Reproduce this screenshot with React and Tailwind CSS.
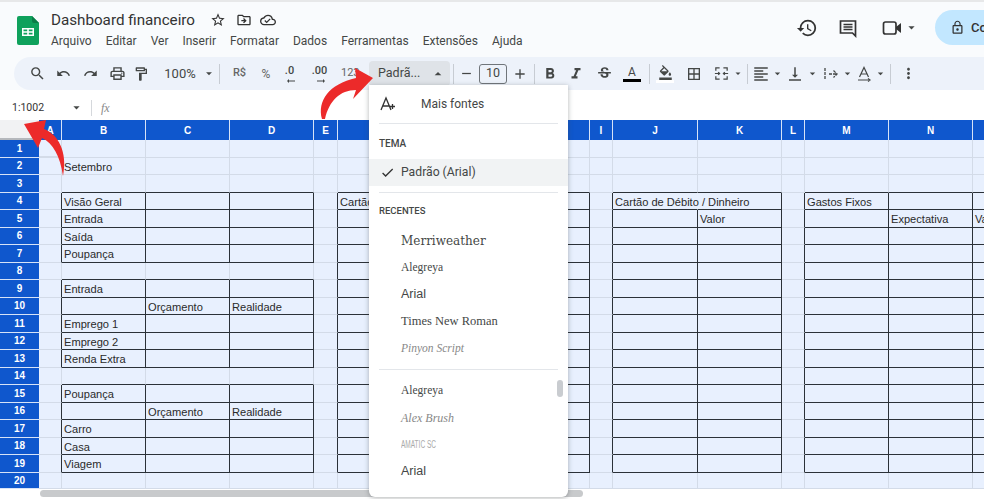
import React from 'react'
import {
  MdSearch, MdUndo, MdRedo, MdOutlinePrint, MdOutlineFormatPaint, MdArrowDropDown, MdArrowDropUp,
  MdRemove, MdAdd, MdFormatBold, MdFormatItalic, MdStrikethroughS, MdOutlineFormatColorFill,
  MdBorderAll, MdFormatAlignLeft, MdVerticalAlignBottom, MdMoreVert, MdHistory,
  MdLockOutline, MdStarBorder, MdOutlineDriveFileMove, MdOutlineCloudDone, MdCheck,
  MdArrowRightAlt,
} from 'react-icons/md'

const colNames = ['A', 'B', 'C', 'D', 'E', 'F', 'G', 'H', 'I', 'J', 'K', 'L', 'M', 'N', 'O']

const boxes = [
  ['BCD', 4, 7],
  ['BCD', 9, 13],
  ['BCD', 15, 19],
  ['FGH', 4, 19],
  ['JK', 4, 19],
  ['MNO', 4, 19],
]

const texts = {
  B2: 'Setembro',
  B4: 'Visão Geral',
  B5: 'Entrada',
  B6: 'Saída',
  B7: 'Poupança',
  B9: 'Entrada',
  C10: 'Orçamento',
  D10: 'Realidade',
  B11: 'Emprego 1',
  B12: 'Emprego 2',
  B13: 'Renda Extra',
  B15: 'Poupança',
  C16: 'Orçamento',
  D16: 'Realidade',
  B17: 'Carro',
  B18: 'Casa',
  B19: 'Viagem',
  F4: 'Cartão',
  J4: 'Cartão de Débito / Dinheiro',
  K5: 'Valor',
  M4: 'Gastos Fixos',
  N5: 'Expectativa',
  O5: 'Valor',
}

function inBox(col, row) {
  return boxes.some(([cols, from, to]) => cols.includes(col) && row >= from && row <= to)
}

function Cell({ col, row, next }) {
  const darkRight = inBox(col, row) || (next && inBox(next, row))
  const darkBottom = inBox(col, row) || inBox(col, row + 1)
  const noRight = col === 'J' && row === 4
  return (
    <div
      className={`min-w-0 border-r border-b pl-[2px] text-[11.1px] leading-[18px] whitespace-nowrap text-[#2a2a2a] ${
        noRight ? 'border-r-transparent' : darkRight ? 'border-r-[#2b3138]' : 'border-r-[#d3dbe8]'
      } ${darkBottom ? 'border-b-[#2b3138]' : 'border-b-[#d3dbe8]'} ${
        col === 'A' && row === 1 ? 'border-b-2 border-b-[#1a5fd0]' : ''
      }`}
    >
      {texts[col + row]}
    </div>
  )
}

function Sheet() {
  const rows = Array.from({ length: 20 }, (_, i) => i + 1)
  return (
    <div className="grid grid-cols-[39px_23px_84px_84px_84px_24px_84px_84px_84px_23px_85px_84px_23px_84px_84px_84px] grid-rows-[20px_repeat(19,17.5px)_16px] overflow-hidden bg-[#e8f0fe] font-['Liberation_Sans',sans-serif]">
      <div className="border-b-2 border-b-[#b5b8bc] bg-[#f1f2f3]" />
      {colNames.map((c) => (
        <div key={c} className="flex items-center justify-center border-r border-r-[#d7e3f7] bg-[#0f57cd] text-[10px] font-bold text-white">
          {c}
        </div>
      ))}
      {rows.map((row) => (
        <React.Fragment key={row}>
          <div className="flex items-center justify-center border-b border-b-[#d7e3f7] bg-[#0f57cd] text-[10px] font-bold text-white">
            {row}
          </div>
          {colNames.map((c, i) => (
            <Cell key={c} col={c} row={row} next={colNames[i + 1]} />
          ))}
        </React.Fragment>
      ))}
    </div>
  )
}

function Caret() {
  return <MdArrowDropDown className="text-[15px] text-[#444746]" />
}

function Sep() {
  return <div className="mx-[3px] h-[20px] w-px shrink-0 bg-[#c7ccd3]" />
}

function MergeIcon() {
  return (
    <svg width="17" height="17" viewBox="0 0 18 18" fill="none" stroke="#444746" strokeWidth="1.3">
      <path d="M3 6V3h4M15 6V3h-4M3 12v3h4M15 12v3h-4M2 9h5M16 9h-5M5.5 7.5 7 9l-1.5 1.5M12.5 7.5 11 9l1.5 1.5" />
    </svg>
  )
}

function WrapIcon() {
  return (
    <svg width="18" height="18" viewBox="0 0 18 18" fill="none" stroke="#444746" strokeWidth="1.3">
      <path d="M3 3v12M7 9h8M11.5 5.5 15 9l-3.5 3.5" strokeDasharray="3 1" />
    </svg>
  )
}

function TextRotateIcon() {
  return (
    <svg width="18" height="18" viewBox="0 0 18 18" fill="none" stroke="#444746" strokeWidth="1.2">
      <path d="M4.5 12 9 2.5 13.5 12M6 9h6M3 15h11" />
      <path d="m13 13.5 2 1.5-2 1.5" />
    </svg>
  )
}

function CommentIcon() {
  return (
    <svg width="20" height="20" viewBox="0 0 20 20" fill="none" stroke="#333" strokeWidth="1.7">
      <path d="M2.5 3h15v15l-3-3h-12Z" />
      <path d="M5.5 6.5h9M5.5 9h9M5.5 11.5h9" strokeWidth="1.3" />
    </svg>
  )
}

function VideoIcon() {
  return (
    <svg width="22" height="18" viewBox="0 0 22 18">
      <rect x="1.5" y="3" width="12.5" height="12" rx="2" fill="none" stroke="#333" strokeWidth="1.7" />
      <path d="M14 8 19 4v10l-5-4Z" fill="#333" />
    </svg>
  )
}

function Toolbar() {
  const icon = 'text-[#444746]'
  return (
    <div className="ml-[14px] flex h-[33px] items-center rounded-l-full bg-[#edf2fa] pl-[10px] font-['Roboto',sans-serif] text-[#444746]">
      <div className="flex w-[26px] justify-center"><MdSearch className={`text-[17px] ${icon}`} /></div>
      <div className="flex w-[27px] justify-center"><MdUndo className={`text-[15px] ${icon}`} /></div>
      <div className="flex w-[27px] justify-center"><MdRedo className={`text-[15px] ${icon}`} /></div>
      <div className="flex w-[26px] justify-center"><MdOutlinePrint className={`text-[17px] ${icon}`} /></div>
      <div className="flex w-[22px] justify-center"><MdOutlineFormatPaint className={`text-[16px] ${icon}`} /></div>
      <div className="flex w-[50px] justify-center pl-[6px] text-[13px]">100%</div>
      <div className="flex w-[14px] justify-center"><Caret /></div>
      <Sep />
      <div className="flex w-[33px] justify-center text-[11px] font-medium text-[#666]">R$</div>
      <div className="flex w-[20px] justify-center text-[12px] text-[#666]">%</div>
      <div className="relative flex w-[27px] justify-center text-[11px] font-medium">
        <span className="-mt-[5px]">.0</span>
        <MdArrowRightAlt className="absolute top-[7px] left-[9px] rotate-180 text-[12px]" />
      </div>
      <div className="relative flex w-[33px] justify-center text-[11px] font-medium">
        <span className="-mt-[5px]">.00</span>
        <MdArrowRightAlt className="absolute top-[7px] left-[12px] text-[12px]" />
      </div>
      <div className="flex w-[33px] justify-start pl-[5px] text-[11px] text-[#666]">123</div>
      <div className="flex h-[25px] w-[81px] items-center rounded-[4px] bg-[#dfe3e8] pl-[9px] text-[12.5px]">
        Padrã...
        <MdArrowDropUp className="ml-[10px] text-[16px]" />
      </div>
      <Sep />
      <div className="flex w-[18px] justify-center"><MdRemove className="text-[15px]" /></div>
      <div className="ml-[4px] mr-[2px] flex h-[20px] w-[28px] items-center justify-center rounded-[3px] border border-[#70757a] text-[12.5px]">10</div>
      <div className="flex w-[22px] justify-center"><MdAdd className="text-[16px]" /></div>
      <Sep />
      <div className="flex w-[24px] justify-center"><MdFormatBold className="text-[18px]" /></div>
      <div className="flex w-[28px] justify-center"><MdFormatItalic className="text-[18px]" /></div>
      <div className="flex w-[28px] justify-center"><MdStrikethroughS className="text-[17px]" /></div>
      <div className="flex w-[28px] flex-col items-center text-[12px] leading-[13px]">
        <span>A</span>
        <div className="h-[3px] w-[18px] bg-black" />
      </div>
      <Sep />
      <div className="flex w-[24px] flex-col items-center">
        <MdOutlineFormatColorFill className="text-[15px]" />
        <div className="h-[3px] w-[18px] bg-white" />
      </div>
      <div className="flex w-[33px] justify-center"><MdBorderAll className="text-[16px]" /></div>
      <div className="flex w-[22px] justify-center"><MergeIcon /></div>
      <div className="flex w-[12px] justify-center"><Caret /></div>
      <Sep />
      <div className="flex w-[20px] justify-center"><MdFormatAlignLeft className="text-[18px]" /></div>
      <div className="flex w-[13px] justify-center"><Caret /></div>
      <div className="flex w-[22px] justify-center"><MdVerticalAlignBottom className="text-[18px]" /></div>
      <div className="flex w-[13px] justify-center"><Caret /></div>
      <div className="ml-[2px] flex w-[20px] justify-center"><WrapIcon /></div>
      <div className="flex w-[13px] justify-center"><Caret /></div>
      <div className="flex w-[20px] justify-center"><TextRotateIcon /></div>
      <div className="flex w-[13px] justify-center"><Caret /></div>
      <Sep />
      <div className="ml-[4px] flex w-[20px] justify-center"><MdMoreVert className="text-[17px]" /></div>
    </div>
  )
}

function FontItem({ className, children }) {
  return <div className={`flex h-[27px] items-center pl-[32px] ${className}`}>{children}</div>
}

function FontMenu() {
  return (
    <div className="absolute top-[85px] left-[369px] flex h-[412px] w-[199px] flex-col rounded-b-[6px] bg-white shadow-[0_1px_5px_rgba(60,64,67,0.4)] font-['Roboto',sans-serif] text-[#444746]">
      <div className="flex h-[38px] items-center pl-[11px] text-[12px]">
        <svg width="16" height="16" viewBox="0 0 16 16" fill="none" stroke="#333" strokeWidth="1.3">
          <path d="M1 14 6 2l5 12M2.8 10h6.5M10 10.5h5M12.5 8v5" />
        </svg>
        <span className="ml-[25px]">Mais fontes</span>
      </div>
      <div className="mx-[10px] mb-px h-px bg-[#e3e6ea]" />
      <div className="flex h-[34px] items-center pl-[10px] pt-[2px] text-[10px] font-medium">TEMA</div>
      <div className="flex h-[27px] items-center bg-[#f1f3f4] pl-[11px] text-[12.2px]">
        <MdCheck className="text-[15px] text-[#333]" />
        <span className="ml-[6px]">Padrão (Arial)</span>
      </div>
      <div className="mx-[10px] mt-[6px] h-px bg-[#e3e6ea]" />
      <div className="flex h-[34px] items-center pl-[10px] pt-[3px] text-[9.5px] font-medium">RECENTES</div>
      <FontItem className="text-[12px] font-['DejaVu_Serif',serif]">Merriweather</FontItem>
      <FontItem className="text-[11.5px] font-['Liberation_Serif',serif]">Alegreya</FontItem>
      <FontItem className="text-[12.5px] font-['Liberation_Sans',sans-serif]">Arial</FontItem>
      <FontItem className="text-[12.5px] font-['Liberation_Serif',serif] font-medium">Times New Roman</FontItem>
      <FontItem className="text-[11.5px] font-['Liberation_Serif',serif] italic text-[#888]">Pinyon Script</FontItem>
      <div className="mx-[10px] mt-[7px] mb-[7px] h-px bg-[#e3e6ea]" />
      <FontItem className="text-[11.5px] font-['Liberation_Serif',serif]">Alegreya</FontItem>
      <FontItem className="text-[12px] font-['Liberation_Serif',serif] italic text-[#888]">Alex Brush</FontItem>
      <FontItem className="text-[10px] font-['Liberation_Sans',sans-serif] text-[#aaa]">
        <span className="inline-block origin-left scale-x-[0.65]">AMATIC SC</span>
      </FontItem>
      <FontItem className="text-[12.5px] font-['Liberation_Sans',sans-serif]">Arial</FontItem>
      <div className="absolute top-[295px] right-[5px] h-[17px] w-[6px] rounded-full bg-[#c9ccd0]" />
    </div>
  )
}

function SheetsLogo() {
  return (
    <svg width="22" height="29" viewBox="0 0 22 29" className="shrink-0">
      <path d="M2 0h13l7 7v20a2 2 0 0 1-2 2H2a2 2 0 0 1-2-2V2a2 2 0 0 1 2-2Z" fill="#0fa15c" />
      <path d="M15 0l7 7h-5a2 2 0 0 1-2-2Z" fill="#0b7d47" />
      <path d="M5 12h12v8H5Zm1.5 1.6v1.7h3.7v-1.7Zm5.3 0v1.7h3.7v-1.7ZM6.5 16.8v1.7h3.7v-1.7Zm5.3 0v1.7h3.7v-1.7Z" fill="#fff" fillRule="evenodd" />
    </svg>
  )
}

function Arrows() {
  return (
    <svg className="pointer-events-none absolute inset-0" width="984" height="499" fill="#ec2a2a">
      <path d="M322 119C317 101 329 84 356 78L355 68L373 78L353 99L356 90C340 90 329 101 325 119Z" />
      <path d="M24 124L46 120L44 129C58 134 68 152 63 176C60 156 53 143 42 138L38 148Z" />
    </svg>
  )
}

export default function App() {
  return (
    <div className="relative h-screen w-screen overflow-hidden bg-white">
      <div className="h-[2px] bg-[#e7e8e9]" />
      <div className="bg-[#f9fbfd]">
        <div className="flex h-[55px] items-start pl-[17px] font-['Roboto',sans-serif] text-[#333]">
          <div className="pt-[14px]"><SheetsLogo /></div>
          <div className="ml-[12px] pt-[8px]">
            <div className="flex h-[20px] items-center text-[15.2px] text-[#333]">
              Dashboard financeiro
              <MdStarBorder className="ml-[15px] text-[16px]" />
              <MdOutlineDriveFileMove className="ml-[10px] text-[16px]" />
              <MdOutlineCloudDone className="ml-[8px] text-[16px]" />
            </div>
            <div className="mt-[2px] flex gap-[14px] text-[12px] text-[#444746]">
              <span>Arquivo</span>
              <span>Editar</span>
              <span>Ver</span>
              <span>Inserir</span>
              <span>Formatar</span>
              <span>Dados</span>
              <span>Ferramentas</span>
              <span>Extensões</span>
              <span>Ajuda</span>
            </div>
          </div>
          <div className="ml-auto flex items-center pt-[8px] text-[#333]">
            <MdHistory className="text-[22px]" />
            <span className="ml-[20px]"><CommentIcon /></span>
            <span className="ml-[24px]"><VideoIcon /></span>
            <Caret />
            <div className="ml-[16px] flex h-[35px] w-[49px] items-center rounded-l-full bg-[#c2e7ff] pl-[15px] text-[13px] font-medium whitespace-nowrap">
              <MdLockOutline className="shrink-0 text-[15px]" />
              <span className="ml-[6px]">Co</span>
            </div>
          </div>
        </div>
        <Toolbar />
      </div>
      <div className="flex h-[30px] items-center bg-white pt-[5px] font-['Roboto',sans-serif] text-[10.5px] text-[#333]">
        <span className="ml-[12px] w-[57px]">1:1002</span>
        <MdArrowDropDown className="text-[15px] text-[#444746]" />
        <div className="ml-[7px] h-[16px] w-px bg-[#d5d8dc]" />
        <span className="ml-[9px] font-['Liberation_Serif',serif] text-[12px] italic text-[#888]">fx</span>
      </div>
      <Sheet />
      <div className="h-[11px] border-b border-b-[#dfe0e1] bg-white pt-[1px] pl-[40px]">
        <div className="h-[7px] w-[543px] rounded-full bg-[#c8cacc]" />
      </div>
      <FontMenu />
      <Arrows />
    </div>
  )
}
